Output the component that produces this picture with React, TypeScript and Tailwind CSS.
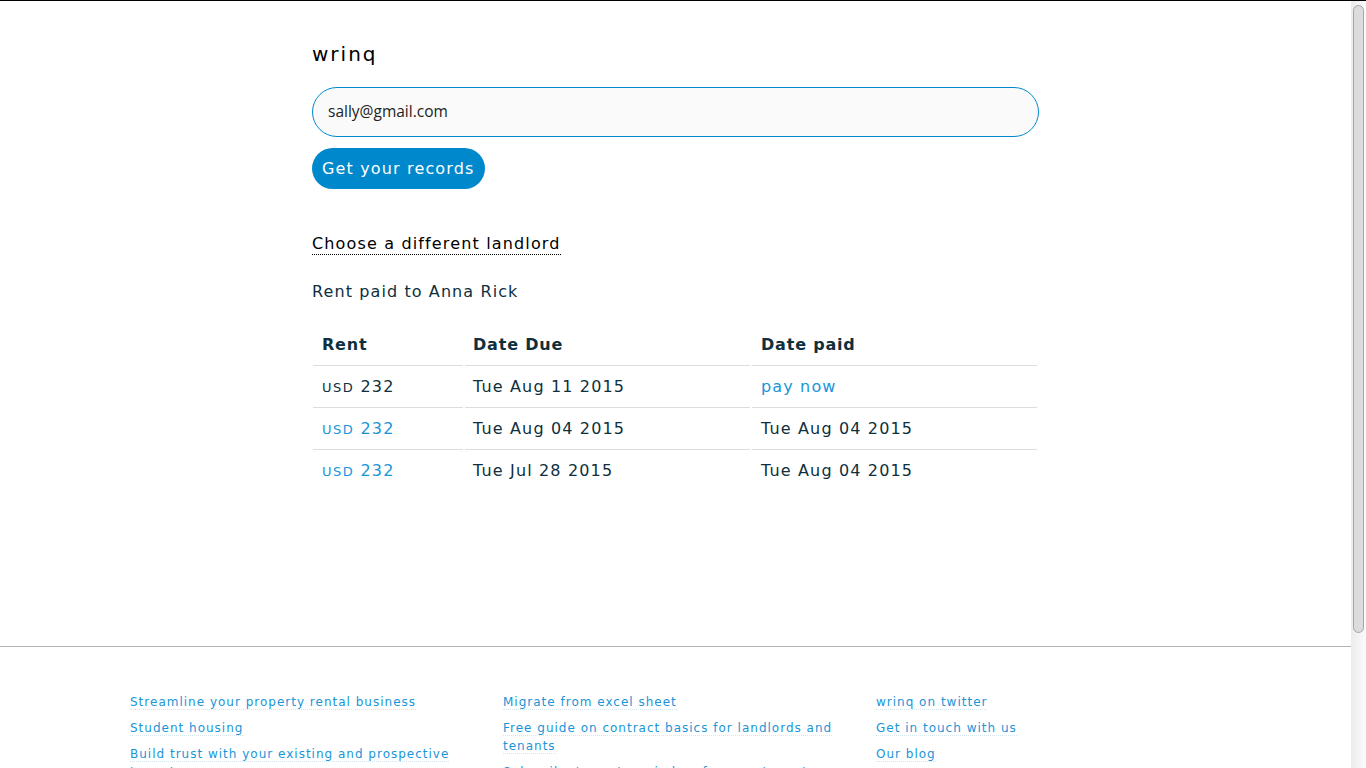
import React from "react";

const rows = [
  { amount: "232", due: "Tue Aug 11 2015", paid: null, link: false },
  { amount: "232", due: "Tue Aug 04 2015", paid: "Tue Aug 04 2015", link: true },
  { amount: "232", due: "Tue Jul 28 2015", paid: "Tue Aug 04 2015", link: true },
];

const footerCols = [
  [
    "Streamline your property rental business",
    "Student housing",
    "Build trust with your existing and prospective tenants",
    "Rent receipts for tax purposes",
  ],
  [
    "Migrate from excel sheet",
    "Free guide on contract basics for landlords and tenants",
    "Subscribe to rent reminders for your tenants",
    "Pricing",
  ],
  ["wrinq on twitter", "Get in touch with us", "Our blog", "Terms of use"],
];

const App = () => {
  return (
    <div className="h-screen overflow-hidden flex bg-white border-t border-black font-['DejaVu_Sans',sans-serif] text-[#0e2f3d]">
      <div className="flex-1 min-w-0">
        <div className="w-[727px] mx-auto pt-[41px] pb-[154px]">
          <div className="text-[20px] tracking-[2px] text-black leading-6">wrinq</div>

          <div className="mt-[21px] h-[50px] rounded-full border border-[#0088cc] bg-[#fafafa] flex items-center px-[15px] pb-[1px]">
            <span className="font-['Open_Sans',sans-serif] text-[15.5px] text-[#222]">sally@gmail.com</span>
          </div>

          <button className="mt-[11px] h-[41px] px-[10px] rounded-full bg-[#0088cc] text-white text-[16px] tracking-[1.15px]">
            Get your records
          </button>

          <div className="mt-[43px]">
            <span className="text-[16px] tracking-[1.15px] text-black border-b border-dotted border-black pb-[1px]">
              Choose a different landlord
            </span>
          </div>

          <div className="mt-[24px] text-[16px] tracking-[1.1px]">Rent paid to Anna Rick</div>

          <table className="mt-[20px] -ml-[1px] w-[728px] border-separate border-spacing-x-[2px] border-spacing-y-0 text-[16px] tracking-[1.15px]">
            <thead>
              <tr>
                <th className="w-[150px] h-[42px] text-left font-bold tracking-[0.8px] pl-[9px] border-b border-[#dddddd]">Rent</th>
                <th className="w-[285px] h-[42px] text-left font-bold tracking-[0.8px] pl-[8px] border-b border-[#dddddd]">Date Due</th>
                <th className="h-[42px] text-left font-bold tracking-[0.8px] pl-[9px] border-b border-[#dddddd]">Date paid</th>
              </tr>
            </thead>
            <tbody>
              {rows.map((r, i) => {
                const last = i === rows.length - 1;
                const b = last ? "" : "border-b border-[#dddddd]";
                return (
                  <tr key={i}>
                    <td className={`h-[42px] pl-[9px] ${b} ${r.link ? "text-[#1a95d8]" : ""}`}>
                      <span className="text-[13px] tracking-[1.5px]">USD</span> {r.amount}
                    </td>
                    <td className={`h-[42px] pl-[8px] ${b}`}>{r.due}</td>
                    <td className={`h-[42px] pl-[9px] ${b}`}>
                      {r.paid ? r.paid : <span className="text-[#1a95d8]">pay now</span>}
                    </td>
                  </tr>
                );
              })}
            </tbody>
          </table>
        </div>

        <footer className="border-t border-[#b3b3b3] pt-[46px] pb-[40px]">
          <div className="w-[1091px] mx-auto grid grid-cols-3 gap-x-[28px]">
            {footerCols.map((col, ci) => (
              <ul key={ci} className="flex flex-col gap-[8px]">
                {col.map((t) => (
                  <li key={t} className="text-[12px] leading-[18px] tracking-[1px] text-[#1a95d8]">
                    <a className="border-b border-dotted border-[#d6e6ef]">{t}</a>
                  </li>
                ))}
              </ul>
            ))}
          </div>
        </footer>
      </div>

      {/* scrollbar */}
      <div className="w-[15px] shrink-0 bg-gradient-to-r from-[#ececec] to-[#fbfbfb] pt-[4px]">
        <div className="mx-auto w-[11px] h-[628px] rounded-full bg-[#dcdcdc] border border-[#a6a6a6]" />
      </div>
    </div>
  );
};

export default App;
